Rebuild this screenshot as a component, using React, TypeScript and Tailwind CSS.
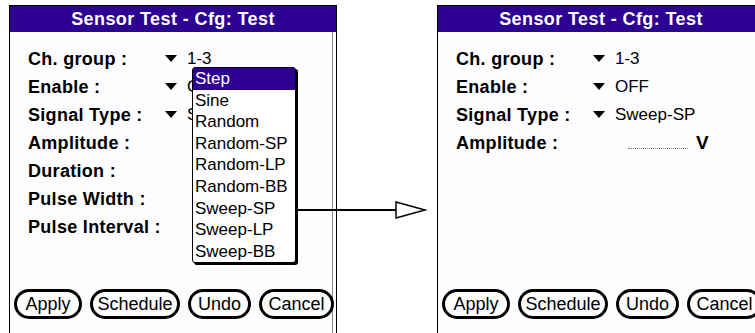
const fields = ['Ch. group :', 'Enable :', 'Signal Type :', 'Amplitude :', 'Duration :', 'Pulse Width :', 'Pulse Interval :'];

const options = ['Step', 'Sine', 'Random', 'Random-SP', 'Random-LP', 'Random-BB', 'Sweep-SP', 'Sweep-LP', 'Sweep-BB'];

function DownArrow() {
  return (
    <svg width="12" height="8" viewBox="0 0 12 8" className="shrink-0">
      <polygon points="0,0 12,0 6,7" fill="#000" />
    </svg>
  );
}

function Buttons() {
  return (
    <div className="mt-auto mb-[14px] flex gap-[8px] pl-[4px] text-[18px] leading-none text-black">
      <button className="flex h-[30px] w-[68px] shrink-0 items-center justify-center rounded-full border-[3px] border-black">Apply</button>
      <button className="flex h-[30px] w-[90px] shrink-0 items-center justify-center rounded-full border-[3px] border-black">Schedule</button>
      <button className="flex h-[30px] w-[63px] shrink-0 items-center justify-center rounded-full border-[3px] border-black">Undo</button>
      <button className="flex h-[30px] w-[75px] shrink-0 items-center justify-center rounded-full border-[3px] border-black">Cancel</button>
    </div>
  );
}

function Row({ label, value, children }: { label: string; value?: string; children?: React.ReactNode }) {
  return (
    <div className="flex h-[28px] items-center">
      <span className="w-[137px] shrink-0 text-[18px] font-bold tracking-[0.3px]">{label}</span>
      {value && (
        <>
          <DownArrow />
          <span className="ml-[10px] text-[17px]">{value}</span>
        </>
      )}
      {children}
    </div>
  );
}

function Panel({ children, menu }: { children: React.ReactNode; menu?: boolean }) {
  return (
    <div className="relative flex h-[328px] w-[328px] shrink-0 flex-col border-x border-t border-black bg-[#fdfcff] shadow-[inset_-3px_0_0_#fff,inset_-4px_0_0_#8a8a8a]">
      <div className="flex h-[26px] items-center justify-center bg-[#2c0091] text-[18px] font-bold tracking-[0.4px] text-white">
        Sensor Test - Cfg: Test
      </div>
      <div className="flex flex-col pl-[18px] pt-[13px]">{children}</div>
      <Buttons />
      {menu && (
        <div className="absolute left-[182px] top-[61px] w-[104px] rounded-[3px] border border-black bg-white text-[17px] shadow-[2px_2px_0_#000]">
          {options.map((o, i) => (
            <div
              key={o}
              className={`flex h-[21.6px] items-center pl-[2px] ${i === 0 ? 'bg-[#2c0091] text-white' : 'text-black'}`}
            >
              {o}
            </div>
          ))}
        </div>
      )}
    </div>
  );
}

export default function App() {
  return (
    <div className="relative h-[333px] w-[755px] overflow-hidden bg-white font-['Liberation_Sans',Arial,sans-serif] text-black">
      <div className="flex gap-[100px] pl-[9px] pt-[5px]">
        <Panel menu>
          <Row label={fields[0]} value="1-3" />
          <Row label={fields[1]} value="OFF" />
          <Row label={fields[2]} value="Sweep-SP" />
          {fields.slice(3).map((f) => (
            <Row key={f} label={f} />
          ))}
        </Panel>
        <Panel>
          <Row label={fields[0]} value="1-3" />
          <Row label={fields[1]} value="OFF" />
          <Row label={fields[2]} value="Sweep-SP" />
          <Row label={fields[3]}>
            <span className="ml-[35px] mt-[10px] w-[60px] border-b border-dotted border-[#777]" />
            <span className="ml-[8px] text-[19px] font-bold">V</span>
          </Row>
        </Panel>
      </div>

      {/* arrow from the picked item to the result screen */}
      <svg className="pointer-events-none absolute left-0 top-0" width="755" height="333">
        <line x1="296" y1="210" x2="397" y2="210" stroke="#000" strokeWidth="2" />
        <polygon points="396,202 425,210 396,218" fill="#fff" stroke="#000" strokeWidth="1.5" />
      </svg>
    </div>
  );
}
